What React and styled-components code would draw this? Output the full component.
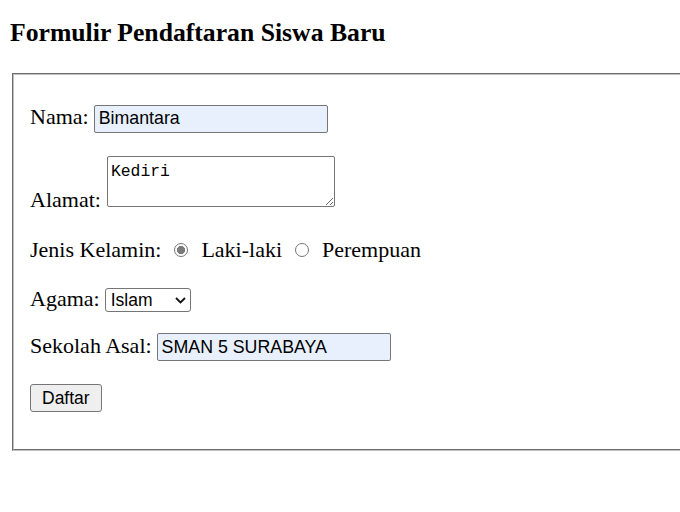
import styled, { createGlobalStyle } from 'styled-components';

const Global = createGlobalStyle`
    html, body {
        margin: 0;
        background: #fff;
        overflow: hidden;
    }
`;

const Page = styled.div`
    padding: 8px;
    color: #000;
`;

const Title = styled.h2`
    font: bold 25.7px "Liberation Serif", "Times New Roman", serif;
    margin: 10px 0 25px 2px;
`;

const Fieldset = styled.fieldset`
    margin: 0 0 0 4px;
    width: 720px;
    padding: 29px 16px 37px;
    border: 2px groove #c0c0c0;
    min-inline-size: auto;
`;

const Stack = styled.div`
    display: flex;
    flex-direction: column;
`;

const Row = styled.div`
    display: flex;
    align-items: ${p => p.$align || 'baseline'};
    margin-top: ${p => p.$space || 0}px;
    font: 22px "Liberation Serif", "Times New Roman", serif;
`;

const Label = styled.label`
    margin-right: 5px;
    line-height: ${p => (p.$sink ? 1 : 'normal')};
    margin-bottom: ${p => (p.$sink ? -4 : 0)}px;
`;

const TextInput = styled.input`
    box-sizing: border-box;
    width: 234px;
    height: 28px;
    padding: 0 4px;
    margin: 0;
    font: 17.8px "Liberation Sans", Arial, sans-serif;
    color: #000;
    background: #e8f0fe;
    border: 1px solid #767676;
    border-radius: 2px;
    outline: none;
`;

const TextArea = styled.textarea`
    box-sizing: border-box;
    width: 228px;
    height: 51px;
    margin: 0 0 0 1px;
    padding: 5px 3px;
    font: 16.4px "Liberation Mono", "Courier New", monospace;
    color: #000;
    background: #fff;
    border: 1px solid #767676;
    border-radius: 2px;
    outline: none;
`;

const Option = styled.label`
    display: flex;
    align-items: center;
`;

const Radio = styled.input`
    appearance: none;
    box-sizing: border-box;
    width: 14px;
    height: 14px;
    margin: 0 13px 0 13px;
    border: 1px solid #767676;
    border-radius: 50%;
    background: #fff;

    &:checked {
        background: radial-gradient(circle, #7a7a7a 0 3.8px, #fff 4.4px);
    }
`;

const SelectBox = styled.span`
    position: relative;
    display: inline-flex;
`;

const Select = styled.select`
    appearance: none;
    box-sizing: border-box;
    width: 86px;
    height: 24px;
    margin: 0;
    padding: 0 0 0 5px;
    font: 17.5px "Liberation Sans", Arial, sans-serif;
    color: #000;
    background: #fff;
    border: 1px solid #767676;
    border-radius: 3px;
    outline: none;
`;

const Chevron = styled.svg`
    position: absolute;
    right: 5px;
    top: 9px;
    pointer-events: none;
`;

const Button = styled.button`
    box-sizing: border-box;
    height: 28px;
    padding: 0 11px;
    margin: 0;
    font: 17.5px "Liberation Sans", Arial, sans-serif;
    color: #000;
    background: #efefef;
    border: 1px solid #767676;
    border-radius: 3px;
`;

export default function App() {
    return (
        <Page>
            <Global />
            <Title>Formulir Pendaftaran Siswa Baru</Title>
            <form onSubmit={e => e.preventDefault()}>
                <Fieldset>
                    <Stack>
                        <Row>
                            <Label htmlFor="nama">Nama:</Label>
                            <TextInput id="nama" defaultValue="Bimantara" />
                        </Row>
                        <Row $space={23} $align="flex-end">
                            <Label $sink htmlFor="alamat">Alamat:</Label>
                            <TextArea id="alamat" defaultValue="Kediri" />
                        </Row>
                        <Row $space={30} $align="center">
                            <span>Jenis Kelamin:</span>
                            <Option>
                                <Radio type="radio" name="jk" defaultChecked />
                                Laki-laki
                            </Option>
                            <Option>
                                <Radio type="radio" name="jk" />
                                Perempuan
                            </Option>
                        </Row>
                        <Row $space={23}>
                            <Label htmlFor="agama">Agama:</Label>
                            <SelectBox>
                                <Select id="agama" defaultValue="Islam">
                                    <option>Islam</option>
                                    <option>Kristen</option>
                                    <option>Katolik</option>
                                    <option>Hindu</option>
                                    <option>Buddha</option>
                                </Select>
                                <Chevron width="11" height="7" viewBox="0 0 11 7">
                                    <path d="M1 1l4.5 4.5L10 1" fill="none" stroke="#111" strokeWidth="1.8" />
                                </Chevron>
                            </SelectBox>
                        </Row>
                        <Row $space={21}>
                            <Label htmlFor="sekolah">Sekolah Asal:</Label>
                            <TextInput id="sekolah" defaultValue="SMAN 5 SURABAYA" />
                        </Row>
                        <Row $space={23}>
                            <Button type="submit">Daftar</Button>
                        </Row>
                    </Stack>
                </Fieldset>
            </form>
        </Page>
    );
}
